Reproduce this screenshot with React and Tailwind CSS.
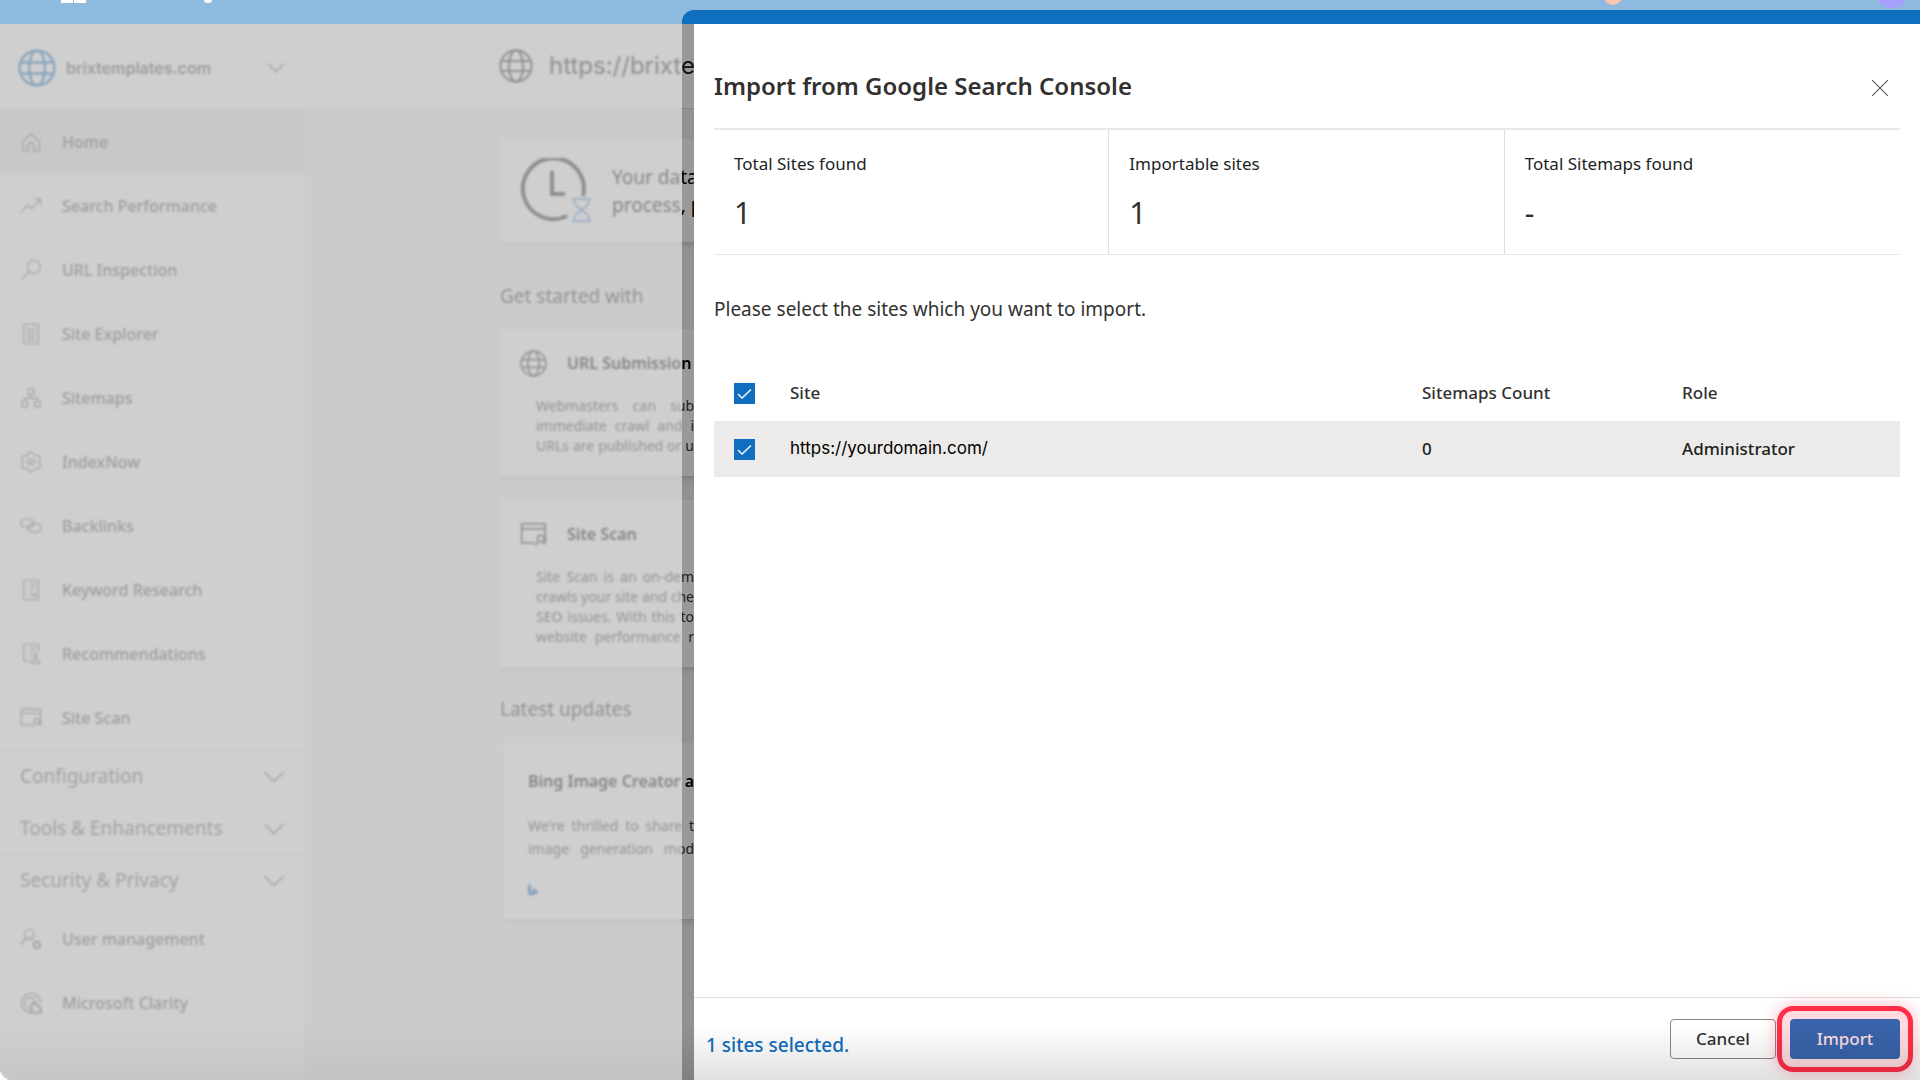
import React, { useState } from 'react';

const ICONS = {
  globe: (
    <>
      <circle cx="12" cy="12" r="11" />
      <ellipse cx="12" cy="12" rx="5" ry="11" />
      <path d="M2 8.5h20M2 15.5h20" />
    </>
  ),
  home: <path d="M3 11.5 12 3l9 8.500V22h-6v-6.500a3 3 0 0 0-6 0V22H3z" />,
  trend: <path d="M1 19l7-8 4 4L22 5M15.500 4.500H22.500V11.500" />,
  search: (
    <>
      <circle cx="15" cy="8.500" r="7" />
      <path d="M10 13.500 1 22.500" />
    </>
  ),
  explorer: (
    <>
      <path d="M4 1.500h16v21H4z" />
      <path d="M7 6.500h2l2 1 3-1h3M7 10.500h2l2 1 3-1h3M7 14.500h2l2 1 3-1h3M7 18.500h2l2 1 3-1h3" />
    </>
  ),
  sitemap: (
    <>
      <path d="M9 2h6v6H9zM2 16h6v6H2zM16 16h6v6h-6z" />
      <path d="M12 8v4M5 16v-4h14v4" />
    </>
  ),
  gear: (
    <>
      <path d="M9 3.500a3.200 3.200 0 0 1 6 0c.6 1.500 1.500 1.800 3 1.500a3.200 3.200 0 0 1 3.500 5c-1 1.300-1 2.700 0 4a3.200 3.200 0 0 1-3.500 5c-1.500-.3-2.400 0-3 1.500a3.200 3.200 0 0 1-6 0c-.6-1.500-1.500-1.800-3-1.500a3.200 3.200 0 0 1-3.500-5c1-1.300 1-2.700 0-4A3.200 3.200 0 0 1 6 5c1.500.3 2.400 0 3-1.500z" />
      <path d="M9.500 8.500 8 12l1.500 3.500M14.500 8.500 16 12l-1.500 3.500M12 8v8" />
    </>
  ),
  link: (
    <>
      <rect x="1" y="4.500" width="14" height="9" rx="4.500" />
      <rect x="9" y="9.500" width="14" height="9" rx="4.500" />
    </>
  ),
  keyword: (
    <>
      <path d="M4 1.500h16v21H4z" />
      <path d="M7 6h1M11 6h6M7 10h1M11 10h6M7 14h1M11 14h3M7 18h1M11 19l3-2 3 2v-5" />
    </>
  ),
  recommend: (
    <>
      <path d="M11 19.500H4v-18h16v8" />
      <path d="M7 6h1M11 6h6M7 10h1M11 10h4M7 14h1M11 14h2" />
      <path d="M17 11l1.500 3-1 3 4 5H12l4-5-1-3z" />
    </>
  ),
  scan: (
    <>
      <path d="M13 19.500H1.500V2.500h21v17H20M1.500 7h21" />
      <circle cx="18.500" cy="15.500" r="3" />
      <path d="M16.500 17.800 13.500 21.500" />
    </>
  ),
  user: (
    <>
      <circle cx="10" cy="6.500" r="5" />
      <path d="M1 19c1-4 4-7.500 9-7.500 2 0 3.500.500 5 1.800" />
      <circle cx="18.500" cy="18.500" r="3.500" strokeWidth="2.500" />
    </>
  ),
  clarity: (
    <>
      <path d="M12 22.500A10.500 10.500 0 1 1 22.500 12" />
      <path d="M11 18a6 6 0 1 1 6-7" />
      <path d="M12.500 13.500v9h10v-5l-7-6z" strokeWidth="2.500" />
    </>
  ),
  chevron: <path d="M1.500 6.500 12 17 22.500 6.500" />,
};

function Icon({ name, className, strokeWidth = 1.5 }) {
  return (
    <svg viewBox="0 0 24 24" fill="none" stroke="currentColor" strokeWidth={strokeWidth} className={className} aria-hidden="true">
      {ICONS[name]}
    </svg>
  );
}

const NAV = [
  { label: 'Home', icon: 'home', active: true },
  { label: 'Search Performance', icon: 'trend' },
  { label: 'URL Inspection', icon: 'search' },
  { label: 'Site Explorer', icon: 'explorer' },
  { label: 'Sitemaps', icon: 'sitemap' },
  { label: 'IndexNow', icon: 'gear' },
  { label: 'Backlinks', icon: 'link' },
  { label: 'Keyword Research', icon: 'keyword' },
  { label: 'Recommendations', icon: 'recommend' },
  { label: 'Site Scan', icon: 'scan' },
];

const SECTIONS = ['Configuration', 'Tools & Enhancements', 'Security & Privacy'];

const FOOTER_NAV = [
  { label: 'User management', icon: 'user' },
  { label: 'Microsoft Clarity', icon: 'clarity' },
];

function NavItem({ label, icon, active }) {
  return (
    <a href="#" className={`flex h-16 items-center gap-5 pl-5 text-base font-medium text-[#555] ${active ? 'bg-[#e8e8e8]' : ''}`}>
      <Icon name={icon} className="size-[22px] shrink-0 text-[#777]" />
      {label}
    </a>
  );
}

function Sidebar() {
  return (
    <nav className="w-[306px] shrink-0 border-r border-[#f0f0f0] bg-white">
      <button type="button" className="flex h-[86px] w-full items-center border-b border-[#f0f0f0] pt-0.5 pr-5 pl-[18px]">
        <Icon name="globe" className="size-[38px] text-[#106ebe]" />
        <span className="ml-2.5 flex-1 text-left font-[Inter,sans-serif] text-base font-semibold text-[#555]">brixtemplates.com</span>
        <Icon name="chevron" className="size-[18px] text-[#444]" />
      </button>
      {NAV.map((item) => (
        <NavItem key={item.label} {...item} />
      ))}
      {SECTIONS.map((label) => (
        <button key={label} type="button" className="flex h-[52px] w-full items-center justify-between border-t border-[#eee] pr-5 pl-5 text-[19px] text-[#666]">
          {label}
          <Icon name="chevron" className="size-[22px]" />
        </button>
      ))}
      <div className="border-t border-[#eee]">
        {FOOTER_NAV.map((item) => (
          <NavItem key={item.label} {...item} />
        ))}
      </div>
    </nav>
  );
}

function Lines({ lines, className }) {
  return (
    <div className={`text-[#333] ${className}`}>
      {lines.map((line) => (
        <p key={line} className="whitespace-nowrap text-justify [text-align-last:justify]">{line}</p>
      ))}
    </div>
  );
}

function ToolCard({ icon, title, lines }) {
  return (
    <section className="bg-white px-5 py-5 shadow-md">
      <div className="flex items-center gap-5">
        <Icon name={icon} className="size-[27px] text-[#333]" />
        <h3 className="text-base leading-7 font-semibold text-black">{title}</h3>
      </div>
      <Lines lines={lines} className="mt-[19px] ml-4 w-[158px] text-sm leading-5" />
    </section>
  );
}

function Dashboard() {
  return (
    <main className="min-w-0 flex-1 bg-[#f2f2f2]">
      <header className="flex h-[85px] items-center gap-4 border-b border-[#ddd] bg-white pl-[193px]">
        <Icon name="globe" className="size-[34px] text-[#333]" />
        <h1 className="font-[Inter,sans-serif] text-2xl text-[#222]">https://brixte</h1>
      </header>
      <div className="w-[900px] pt-[30px] pl-[194px]">
        <section className="flex h-[103px] items-center gap-5 bg-white pl-5 shadow-md">
          <svg viewBox="0 0 72 66" className="h-[66px] w-[72px] text-[#222]" fill="none" aria-hidden="true">
            <path d="M47 58A30.500 30.500 0 1 1 63 38" stroke="currentColor" strokeWidth="4" />
            <path d="M32 13v23h13" stroke="currentColor" strokeWidth="4" />
            <path d="M52 41h19M52 63h19M54 41c0 8 5 8 7.500 11C64 49 69 49 69 41M54 63c0-8 5-8 7.500-11C64 55 69 55 69 63" stroke="#5a9bdc" strokeWidth="2" />
          </svg>
          <p className="text-[19px] leading-7 text-black">
            Your data
            <br />
            process, p
          </p>
        </section>
        <h2 className="mt-10 mb-[19px] text-[19px] leading-7 text-[#333]">Get started with</h2>
        <ToolCard
          icon="globe"
          title="URL Submission"
          lines={['Webmasters can sub', 'immediate crawl and i', 'URLs are published or u']}
        />
        <div className="h-6" />
        <ToolCard
          icon="scan"
          title="Site Scan"
          lines={['Site Scan is an on-dem', 'crawls your site and che', 'SEO issues. With this to', 'website performance r']}
        />
        <h2 className="mt-7 mb-5 text-[19px] leading-7 text-[#333]">Latest updates</h2>
        <section className="ml-[3px] h-[176px] bg-white px-[25px] pt-6 shadow-md">
          <h3 className="text-base leading-7 font-semibold text-black">Bing Image Creator a</h3>
          <Lines lines={["We're thrilled to share t", 'image generation mod']} className="mt-[19px] w-[166px] text-sm leading-[23px]" />
          <svg viewBox="0 0 10 12" className="mt-6 h-3 w-2.5 fill-[#106ebe]" aria-hidden="true">
            <path d="M0 0 3 1v7l2-1-1-3 6 2.500v2.500L3 12 0 10z" />
          </svg>
        </section>
      </div>
    </main>
  );
}

function Checkbox({ label, checked, onChange }) {
  return (
    <span className="relative block size-[21px]">
      <input
        type="checkbox"
        aria-label={label}
        checked={checked}
        onChange={onChange}
        className="block size-[21px] appearance-none border border-[#106ebe] checked:bg-[#106ebe]"
      />
      {checked && (
        <svg viewBox="0 0 21 21" fill="none" stroke="white" strokeWidth="1.300" className="pointer-events-none absolute inset-0" aria-hidden="true">
          <path d="M4 11l4 4L17 6.500" />
        </svg>
      )}
    </span>
  );
}

const STATS = [
  { label: 'Total Sites found', value: '1' },
  { label: 'Importable sites', value: '1' },
  { label: 'Total Sitemaps found', value: '-' },
];

function ImportPanel() {
  const [selected, setSelected] = useState(true);
  const toggle = () => setSelected(!selected);

  return (
    <div role="dialog" aria-labelledby="import-title" className="absolute top-6 right-0 bottom-0 left-[694px] flex flex-col bg-white text-[#323130]">
      <div className="flex-1 px-5">
        <div className="flex h-[104px] items-center justify-between pt-6 pr-3">
          <h2 id="import-title" className="pb-1 text-2xl font-semibold">Import from Google Search Console</h2>
          <button type="button" aria-label="Close" className="text-[#605e5c]">
            <svg viewBox="0 0 16 16" className="size-4" fill="none" stroke="currentColor" strokeWidth="1.200">
              <path d="M0 0 16 16M16 0 0 16" />
            </svg>
          </button>
        </div>

        <dl className="grid grid-cols-3 divide-x divide-[#e1dfdd] border-t-2 border-b border-[#e8e8e8]">
          {STATS.map(({ label, value }) => (
            <div key={label} className="px-5 pt-[22px] pb-[21px]">
              <dt className="text-[17px] leading-6 text-[#201f1e]">{label}</dt>
              <dd className="mt-[17px] text-[30px] leading-10">{value}</dd>
            </div>
          ))}
        </dl>

        <p className="mt-10 text-[19px] leading-7">Please select the sites which you want to import.</p>

        <table className="mt-[42px] w-full table-fixed text-left text-[17px] font-medium">
          <thead>
            <tr className="h-14">
              <th className="w-[76px] pl-5">
                <Checkbox label="Select all sites" checked={selected} onChange={toggle} />
              </th>
              <th className="font-medium">Site</th>
              <th className="w-[260px] font-medium">Sitemaps Count</th>
              <th className="w-[218px] font-medium">Role</th>
            </tr>
          </thead>
          <tbody>
            <tr className="h-14 bg-[#edebe9] text-[#201f1e]">
              <td className="pl-5">
                <Checkbox label="Select https://yourdomain.com/" checked={selected} onChange={toggle} />
              </td>
              <td className="font-[Inter,sans-serif] font-normal text-black">https://yourdomain.com/</td>
              <td>0</td>
              <td>Administrator</td>
            </tr>
          </tbody>
        </table>
      </div>

      <footer className="flex h-[83px] items-start justify-between border-t border-[#e1dfdd] pt-[21px] pr-5 pl-3">
        <p className="pt-3 text-[19px] leading-7 font-medium text-[#106ebe]">{selected ? 1 : 0} sites selected.</p>
        <div className="flex gap-3.5">
          <button type="button" className="h-10 w-[106px] rounded-sm border border-[#8a8886] bg-white text-[17px] font-medium">Cancel</button>
          <div className="relative">
            <button type="button" className="h-10 w-[110px] rounded-sm bg-[#106ebe] text-[17px] font-medium text-white">Import</button>
            <div className="pointer-events-none absolute -inset-[13px] rounded-2xl border-[5px] border-[#ff2d48] bg-[#ff2d48]/17 shadow-[0_0_16px_rgba(255,45,72,0.35)]" />
          </div>
        </div>
      </footer>
    </div>
  );
}

export default function App() {
  return (
    <div className="h-screen bg-white">
      <div className="relative h-full overflow-hidden rounded-bl-xl font-['Noto_Sans','Open_Sans',sans-serif]">
        <div className="flex h-full flex-col">
          <div className="h-6 shrink-0 bg-[#106ebe]" />
          <div className="relative flex flex-1">
            <Sidebar />
            <Dashboard />
            <div className="absolute inset-0 bg-black/40" />
          </div>
        </div>

        <ImportPanel />
        <div className="pointer-events-none absolute inset-x-0 bottom-0 h-14 bg-linear-to-b from-transparent to-black/12" />

        {/* Frosted haze around the highlighted panel */}
        <div className="pointer-events-none absolute top-6 bottom-0 left-0 w-[682px] backdrop-blur-[1px]" />
        <div className="pointer-events-none absolute top-2.5 right-0 bottom-0 left-[682px] rounded-tl-xl shadow-[0_0_0_2000px_rgba(255,255,255,0.53)]" />

        {/* Bottom edge of the app bar content */}
        <div className="absolute inset-x-0 top-0 h-2.5 overflow-hidden">
          <div className="flex h-[3px] gap-px pl-[61px]">
            <span className="h-full w-3 bg-white" />
            <span className="h-full w-3 bg-white" />
            <span className="ml-[117px] h-full w-2 rounded-b-full bg-white/90" />
          </div>
          <span className="absolute right-[298px] bottom-[5px] size-[18px] rounded-full bg-[#f9c6ae]" />
          <span className="absolute right-2.5 bottom-0.5 size-9 rounded-full bg-[#a6a2fb]" />
        </div>
      </div>
    </div>
  );
}
